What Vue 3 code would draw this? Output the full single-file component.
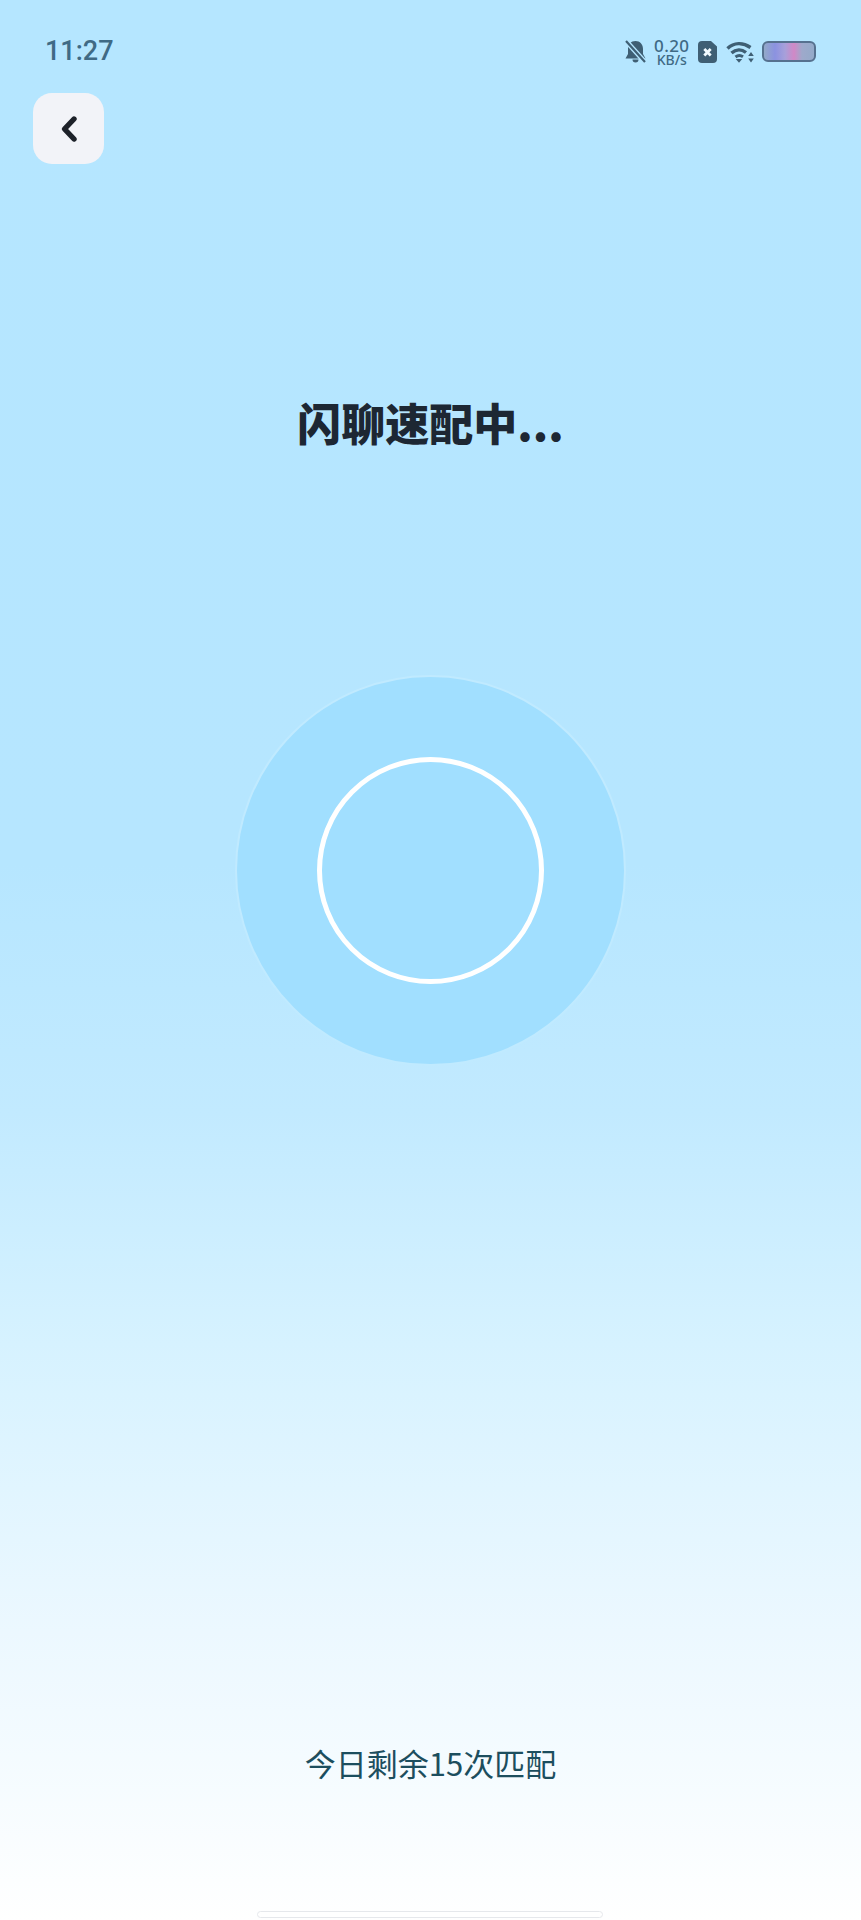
<script setup>
const title = '闪聊速配中...'
const remain = '今日剩余15次匹配'
</script>

<template>
  <div class="page">
    <header class="status">
      <span class="time">11:27</span>
      <div class="icons">
        <svg class="bell" width="21" height="24" viewBox="0 0 21 24">
          <path d="M10.500 1c4.500 0 7.500 3.500 7.500 8v5l2.500 4.500H.5L3 14V9c0-4.500 3-8 7.500-8z" fill="#3f5f74"/>
          <path d="M7.500 19.500a3 3 0 0 0 6 0z" fill="#3f5f74"/>
          <path d="M1 1 20 22" stroke="#b5e6ff" stroke-width="5"/>
          <path d="M1 1 20 22" stroke="#3f5f74" stroke-width="2.200"/>
        </svg>
        <div class="speed"><span class="num">0.20</span><span class="unit">KB/s</span></div>
        <svg class="sim" width="19" height="22" viewBox="0 0 19 22">
          <path d="M4 0h9l6 5.500V18a4 4 0 0 1-4 4H4a4 4 0 0 1-4-4V4a4 4 0 0 1 4-4z" fill="#3f5f74"/>
          <path d="M6.300 8l6.400 6.400M12.700 8l-6.400 6.400" stroke="#f2fbff" stroke-width="2.800"/>
        </svg>
        <svg class="wifi" width="28" height="22" viewBox="0 0 28 22">
          <path d="M1.500 7.500C8 1.200 17 1.200 24.500 6.500" fill="none" stroke="#3f5f74" stroke-width="3.400"/>
          <path d="M5.500 12c4.500-4 10-4 14.500-.5" fill="none" stroke="#3f5f74" stroke-width="3.400"/>
          <path d="M9.500 16c2.500-2 5-2 7.500-.3" fill="none" stroke="#3f5f74" stroke-width="3"/>
          <path d="M9.800 18h6.400L13 21.800z" fill="#3f5f74"/>
          <path d="M25 11l-2.800 4h5.600zM25 21.500l-2.800-4h5.600z" fill="#3f5f74"/>
        </svg>
        <div class="battery"></div>
      </div>
    </header>

    <button class="back" type="button" aria-label="返回">
      <svg width="20" height="28" viewBox="0 0 20 28">
        <path d="M15 4 5.500 14l9.500 10" fill="none" stroke="#1d2129" stroke-width="5.400" stroke-linecap="round" stroke-linejoin="round"/>
      </svg>
    </button>

    <h1 class="title">{{ title }}</h1>

    <div class="radar">
      <div class="ring"></div>
    </div>

    <p class="remain">{{ remain }}</p>

    <div class="home"></div>
  </div>
</template>

<style>
html, body { margin: 0; padding: 0; }
</style>

<style scoped>
.page {
  width: 861px;
  height: 1920px;
  box-sizing: border-box;
  position: relative;
  overflow: hidden;
  display: flex;
  flex-direction: column;
  align-items: center;
  background: linear-gradient(180deg, #b5e6ff 0%, #b6e6ff 45%, #c2eaff 58%, #d6f2ff 70%, #ecf8ff 85%, #fcfeff 98%, #ffffff 100%);
  font-family: "Noto Sans CJK SC", "Noto Sans", sans-serif;
}
.status {
  align-self: stretch;
  height: 50px;
  padding: 26px 45px 0;
  display: flex;
  justify-content: space-between;
  align-items: center;
}
.time {
  font-family: Roboto, sans-serif;
  font-weight: 500;
  font-size: 27px;
  color: #3f6a85;
}
.icons {
  display: flex;
  align-items: center;
  gap: 8.500px;
  margin-top: 1px;
}
.speed {
  display: flex;
  flex-direction: column;
  align-items: center;
  gap: 1px;
  font-family: "Noto Sans", sans-serif;
  color: #3f6a85;
  font-weight: 500;
}
.num { font-size: 17px; line-height: 14px; letter-spacing: 0.4px; }
.unit { font-size: 14px; line-height: 11px; }
.battery {
  width: 50px;
  height: 17px;
  border: 2.500px solid #56718f;
  border-radius: 6px;
  background: linear-gradient(90deg, #93a9c9 0%, #8b92e0 22%, #a7a0da 42%, #d188c6 60%, #9ea9cb 76%, #94aac9 100%);
}
.back {
  align-self: flex-start;
  width: 71px;
  height: 71px;
  margin: 17px 0 0 33px;
  padding: 0;
  border: none;
  border-radius: 19px;
  background: #f2f3f8;
  display: flex;
  align-items: center;
  justify-content: center;
}
.title {
  margin: 226px 0 0;
  font-size: 44px;
  line-height: 64px;
  font-weight: 900;
  color: #1d2733;
}
.radar {
  width: 391px;
  height: 391px;
  box-sizing: border-box;
  margin-top: 221px;
  border-radius: 50%;
  background: #a1dfff;
  border: 2px solid #c0eaff;
  display: flex;
  align-items: center;
  justify-content: center;
}
.ring {
  width: 227px;
  height: 227px;
  box-sizing: border-box;
  border-radius: 50%;
  border: 5px solid #ffffff;
}
.remain {
  margin: 675px 0 0;
  font-size: 31px;
  line-height: 44px;
  color: #1c4e5e;
}
.home {
  position: absolute;
  left: 257px;
  bottom: 2px;
  width: 346px;
  height: 7px;
  box-sizing: border-box;
  background: #fff;
  border: 1px solid #e6e8ec;
  border-radius: 4px;
}
</style>
